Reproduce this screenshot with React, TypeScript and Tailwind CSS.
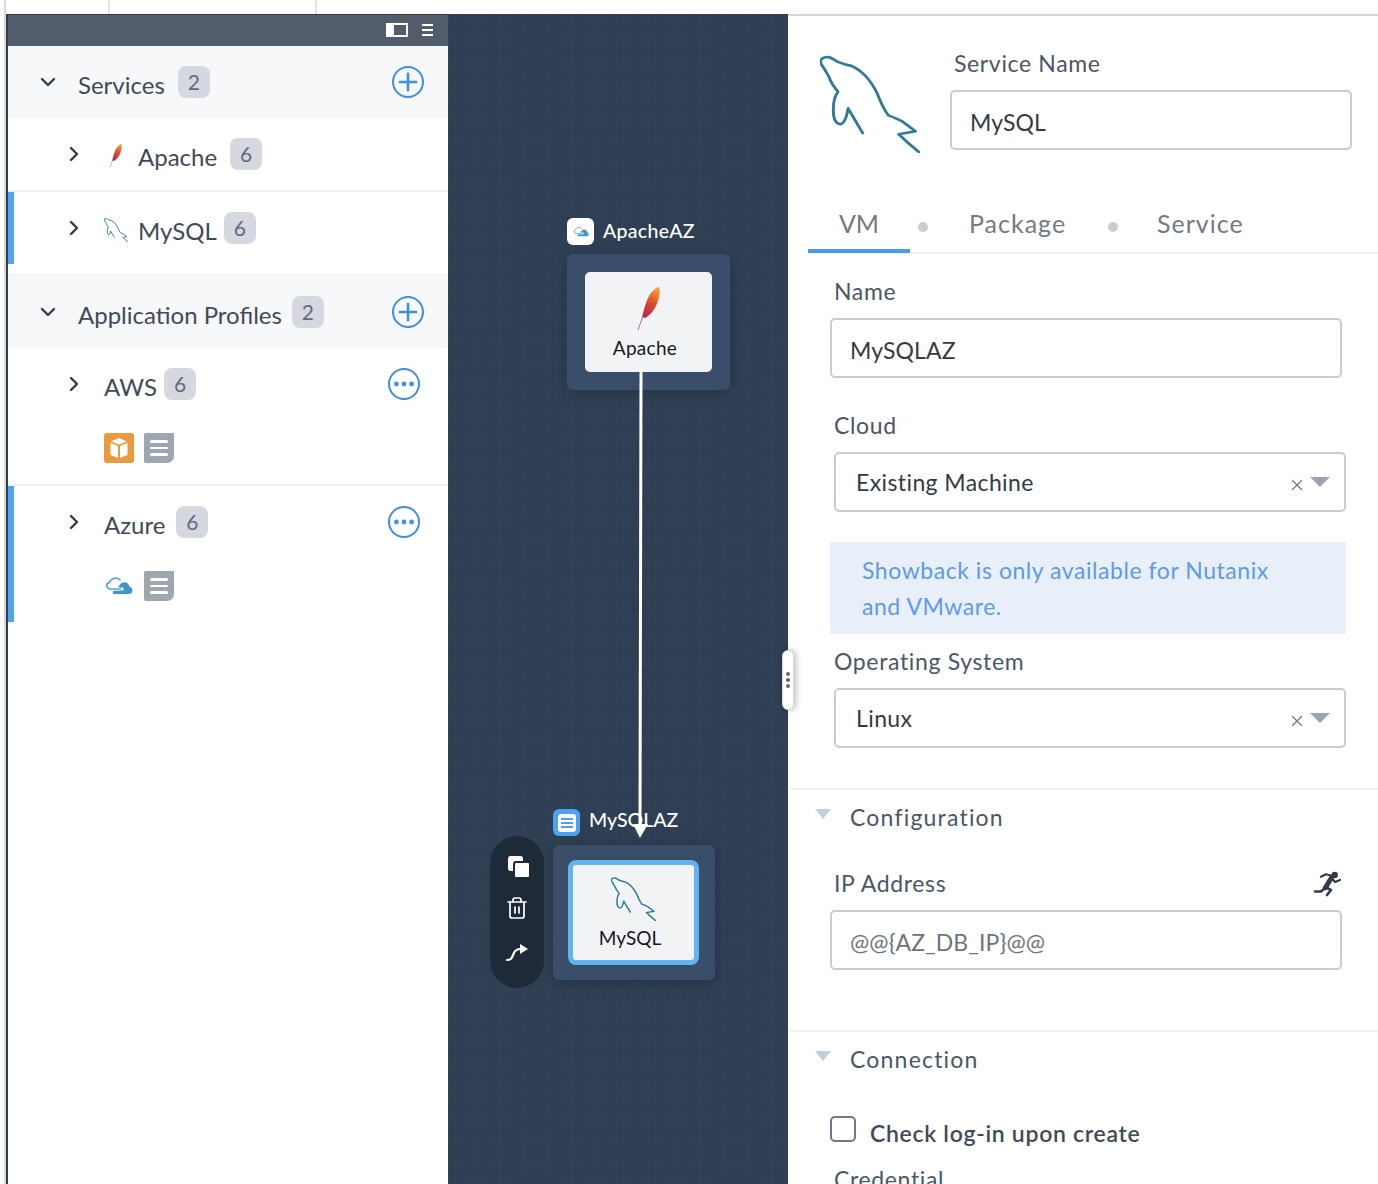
import { useId, type ReactNode } from "react";
import { ChevronDown, ChevronRight, Plus, Ellipsis, Trash2, X } from "lucide-react";

function Dolphin({ w, h, width = 2.6 }: { w: number; h: number; width?: number }) {
  return (
    <svg width={w} height={h} viewBox="2 1 89 99" preserveAspectRatio="none" fill="none" className="shrink-0">
      <path
        d="M40 80 L27 55 Q25 70 20 71 Q13 70 14 53 Q14 45 18 38 Q12 30 10 23 Q6 15 3 10 Q1 3 10 3 Q14 5 18 8 Q24 11 30 12 Q44 19 53 40 Q58 55 63 62 Q72 66 75 68 L87 78 L72 81 Q80 90 90 99"
        stroke="#2f7a96"
        strokeWidth={width}
        strokeLinejoin="round"
        strokeLinecap="round"
      />
    </svg>
  );
}

function Feather({ w, h }: { w: number; h: number }) {
  const id = useId();
  return (
    <svg width={w} height={h} viewBox="0 0 24 44" fill="none" className="shrink-0">
      <defs>
        <linearGradient id={id} x1="20" y1="0" x2="6" y2="32" gradientUnits="userSpaceOnUse">
          <stop offset="0" stopColor="#f5a83c" />
          <stop offset="0.5" stopColor="#dd4a2c" />
          <stop offset="1" stopColor="#a8235a" />
        </linearGradient>
      </defs>
      <path d="M22 0 C17 1 12 7 9 16 C7 22 6 26 5 30 L8 31 C14 28 20 20 22 10 C23 5 23 2 22 0Z" fill={`url(#${id})`} />
      <path d="M6 29 L1 43" stroke="#b06aa8" strokeWidth="1" />
    </svg>
  );
}

function AzureCloud({ w }: { w: number }) {
  return (
    <svg width={w} height={w * 0.68} viewBox="0 0 28 19" fill="none">
      <path d="M8 18 H24 C28 18 29 12 24.5 10.5 C23.5 6 18 5 15.5 8 C13 11 12 14 8 15Z" fill="#3d96c8" />
      <path d="M5 13 C1 12 0.5 7.5 4.5 6.5 C6 2 12 0.5 15 4" stroke="#4fa8d8" strokeWidth="1.6" strokeLinecap="round" />
      <path d="M4 13 H17" stroke="#fff" strokeWidth="3.4" />
      <path d="M4 13 H15" stroke="#4fa8d8" strokeWidth="1.4" strokeLinecap="round" />
      <circle cx="17" cy="13" r="1.9" fill="#fff" stroke="#4fa8d8" strokeWidth="0.9" />
    </svg>
  );
}

function Runner() {
  return (
    <svg width="28" height="26" viewBox="0 0 28 26" fill="none" stroke="#333b46" strokeLinecap="round" strokeLinejoin="round" className="shrink-0">
      <circle cx="21.7" cy="4" r="3.2" fill="#333b46" stroke="none" />
      <path d="M8 5.7 L13 3.3 L18 4.5" strokeWidth="2.2" />
      <path d="M18 7.5 L12.5 16.5" strokeWidth="5" />
      <path d="M12 17 L8 20.5 L2 20.5" strokeWidth="2.6" />
      <path d="M13 16.5 L18 19 L14 24" strokeWidth="2.6" />
      <path d="M19.5 8 L22 11 L27 9" strokeWidth="2.2" />
    </svg>
  );
}

function DocLines() {
  return (
    <div className="flex h-[30px] w-[30px] flex-col justify-center gap-[4px] rounded-[2px] rounded-br-[7px] rounded-tr-none bg-[#9ea7b0] px-[6px]">
      <div className="h-[2.5px] rounded-full bg-white" />
      <div className="h-[2.5px] rounded-full bg-white" />
      <div className="h-[2.5px] rounded-full bg-white" />
    </div>
  );
}

function Badge({ n, className = "" }: { n: number; className?: string }) {
  return (
    <div className={`flex h-[32px] w-[32px] shrink-0 items-center justify-center rounded-[8px] bg-[#d5d9df] text-[21px] text-[#5f6c80] ${className}`}>
      {n}
    </div>
  );
}

function Circle({ children, className = "" }: { children: ReactNode; className?: string }) {
  return (
    <div className={`flex h-[32px] w-[32px] shrink-0 items-center justify-center rounded-full border-2 border-[#3f8fe0] text-[#3f8fe0] ${className}`}>
      {children}
    </div>
  );
}

function GroupHead({ title, count, badgeGap }: { title: string; count: number; badgeGap: string }) {
  return (
    <div className="flex h-[72px] items-start bg-[#f7f8fa] pt-[20px] pl-[28px]">
      <ChevronDown size={24} strokeWidth={2.4} className="mt-[4px] shrink-0 text-[#323c4a]" />
      <span className="ml-[18px] mt-[5px] text-[24px] leading-[28px] text-[#3f4a59]">{title}</span>
      <Badge n={count} className={badgeGap} />
      <Circle className="ml-auto mr-[24px]">
        <Plus size={28} strokeWidth={2.2} />
      </Circle>
    </div>
  );
}

function ServiceRow({ icon, name, active, border, badgeGap }: { icon: ReactNode; name: string; active?: boolean; border?: boolean; badgeGap: string }) {
  return (
    <div className={`flex items-start ${border ? "h-[74px] border-b-2 border-[#f2f2f2]" : "h-[72px]"}`}>
      <div className={`h-[72px] w-[6px] shrink-0 ${active ? "bg-[#4fa4f0]" : ""}`} />
      <ChevronRight size={24} strokeWidth={2.4} className="ml-[48px] mt-[24px] shrink-0 text-[#323c4a]" />
      <div className="ml-[14px] mt-[24px] flex h-[28px] w-[32px] shrink-0 items-center justify-center">{icon}</div>
      <span className="ml-[6px] mt-[25px] text-[24px] leading-[28px] text-[#3f4a59]">{name}</span>
      <Badge n={6} className={`mt-[20px] ${badgeGap}`} />
    </div>
  );
}

function ProfileRow({ name, icon, active, badgeGap }: { name: string; icon: ReactNode; active?: boolean; badgeGap: string }) {
  return (
    <div className="flex h-[136px] items-start">
      <div className={`h-[136px] w-[6px] shrink-0 ${active ? "bg-[#4fa4f0]" : ""}`} />
      <ChevronRight size={24} strokeWidth={2.4} className="ml-[48px] mt-[24px] shrink-0 text-[#323c4a]" />
      <div className="ml-[18px] flex flex-1 flex-col">
        <div className="flex items-start">
          <span className="mt-[25px] text-[24px] leading-[28px] text-[#3f4a59]">{name}</span>
          <Badge n={6} className={`mt-[20px] ${badgeGap}`} />
          <Circle className="ml-auto mr-[28px] mt-[20px]">
            <Ellipsis size={26} strokeWidth={2.4} />
          </Circle>
        </div>
        <div className="mt-[32px] flex items-center gap-[10px]">
          {icon}
          <DocLines />
        </div>
      </div>
    </div>
  );
}

function LeftPanel() {
  return (
    <div className="w-[442px] shrink-0 border-t border-[#2d3e50] border-l-2 border-l-[#2d3e50]">
      <div className="flex h-[31px] items-center justify-end gap-[14px] bg-[#535c6b] pr-[15px] pb-[2px]">
        <div className="flex h-[14px] w-[22px] justify-end bg-white p-[2px] pl-[8px]">
          <div className="h-full w-full bg-[#535c6b]" />
        </div>
        <div className="flex w-[11px] flex-col gap-[3px]">
          <div className="h-[2px] bg-white" />
          <div className="h-[2px] bg-white" />
          <div className="h-[2px] bg-white" />
        </div>
      </div>
      <GroupHead title="Services" count={2} badgeGap="ml-[13px]" />
      <ServiceRow icon={<Feather w={14} h={24} />} name="Apache" badgeGap="ml-[13px]" border />
      <ServiceRow icon={<Dolphin w={24} h={24} width={3.6} />} name="MySQL" badgeGap="ml-[7px]" active />
      <div className="h-[12px] border-b-2 border-[#f2f2f2]" />
      <GroupHead title="Application Profiles" count={2} badgeGap="ml-[10px]" />
      <div className="border-b-2 border-[#f2f2f2]">
        <ProfileRow
          name="AWS"
          badgeGap="ml-[7px]"
          icon={
            <div className="flex h-[30px] w-[30px] items-center justify-center rounded-[3px] bg-[#e99a3e]">
              <svg width="20" height="22" viewBox="0 0 20 22" fill="#fff">
                <path d="M10 1 L18 4.5 L10 7.5 L2 4.5Z" />
                <path d="M1.5 6 L9 9 V21 L1.5 18Z" />
                <path d="M18.5 6 L11 9 V21 L18.5 18Z" />
              </svg>
            </div>
          }
        />
      </div>
      <ProfileRow
        name="Azure"
        badgeGap="ml-[11px]"
        active
        icon={
          <div className="flex h-[30px] w-[30px] items-center justify-center">
            <AzureCloud w={28} />
          </div>
        }
      />
    </div>
  );
}

function Canvas() {
  return (
    <div className="relative w-[340px] shrink-0 bg-[#2f3f54] bg-[linear-gradient(rgba(255,255,255,0.018)_1px,transparent_1px),linear-gradient(90deg,rgba(255,255,255,0.018)_1px,transparent_1px),linear-gradient(rgba(0,0,0,0.03)_1px,transparent_1px),linear-gradient(90deg,rgba(0,0,0,0.03)_1px,transparent_1px)] bg-[size:25px_25px,25px_25px,5px_5px,5px_5px]">
      {/* ApacheAZ node */}
      <div className="absolute left-[119px] top-[204px] w-[163px]">
        <div className="flex h-[27px] items-center">
          <div className="flex h-[27px] w-[27px] items-center justify-center rounded-[6px] bg-white">
            <AzureCloud w={16} />
          </div>
          <span className="ml-[9px] mb-[2px] text-[19.5px] font-medium tracking-[0.3px] text-white">ApacheAZ</span>
        </div>
        <div className="mt-[9px] h-[136px] rounded-[6px] bg-[#3a4d69] p-[18px] shadow-[0_2px_12px_rgba(0,0,0,0.2)]">
          <div className="flex h-[100px] w-[127px] flex-col items-center rounded-[5px] bg-[#f2f3f5] pt-[15px] text-[19px] text-[#15191f]">
            <Feather w={24} h={44} />
            <span className="mr-[7px] mt-[5px] leading-[24px] tracking-[0.3px]">Apache</span>
          </div>
        </div>
      </div>

      {/* MySQLAZ node */}
      <div className="absolute left-[105px] top-[795px] w-[162px]">
        <div className="flex h-[27px] items-center">
          <div className="flex h-[27px] w-[27px] items-center justify-center rounded-[6px] bg-[#4da3ef]">
            <div className="flex h-[18px] w-[18px] flex-col justify-center gap-[2px] rounded-[3px] bg-white px-[3px]">
              <div className="h-[2px] bg-[#4da3ef]" />
              <div className="h-[2px] bg-[#4da3ef]" />
              <div className="h-[2px] bg-[#4da3ef]" />
            </div>
          </div>
          <span className="ml-[9px] mb-[6px] text-[19.5px] font-medium text-white">MySQLAZ</span>
        </div>
        <div className="mt-[9px] h-[135px] rounded-[6px] bg-[#3a4d69] px-[15px] py-[15px] shadow-[0_2px_12px_rgba(0,0,0,0.2)]">
          <div className="flex h-[105px] w-[131px] flex-col items-center rounded-[8px] border-[5px] border-[#63b3f0] bg-[#f2f3f5] pt-[12px] text-[19px] text-[#15191f]">
            <Dolphin w={45} h={44} width={3} />
            <span className="mr-[7px] mt-[5px] leading-[24px]">MySQL</span>
          </div>
        </div>
      </div>

      {/* node toolbar */}
      <div className="absolute left-[42px] top-[822px] flex h-[152px] w-[54px] flex-col items-center rounded-full bg-[#1e2a38] pt-[19px] text-white">
        <svg width="24" height="24" viewBox="0 0 24 24" className="ml-[4px]" fill="#fff">
          <rect x="1" y="1" width="15" height="15" rx="2.5" stroke="#1e2a38" strokeWidth="0" />
          <rect x="7" y="7" width="16" height="16" rx="2" stroke="#1e2a38" strokeWidth="2" />
        </svg>
        <Trash2 size={24} strokeWidth={1.7} className="mt-[17px]" />
        <svg width="24" height="22" viewBox="0 0 24 22" fill="none" className="mt-[21px]">
          <path d="M2 19 C7 19 7 16 9 12 C10 9 12 8 16 8" stroke="#fff" strokeWidth="2.2" strokeLinecap="round" />
          <path d="M15 3 L23 8 L15 13Z" fill="#fff" />
        </svg>
      </div>

      {/* connector */}
      <svg className="absolute left-[180px] top-[355px]" width="24" height="470" viewBox="0 0 24 470" fill="none">
        <path d="M13 0 L12 460" stroke="#fff" strokeWidth="3" />
        <path d="M5 455 H20 L12 469Z" fill="#fff" />
      </svg>

      {/* resize handle */}
      <div className="absolute left-[334px] top-[636px] z-10 flex h-[60px] w-[12px] flex-col items-center justify-center gap-[2px] rounded-[6px] border border-[#d8d8d8] bg-white shadow-[2px_0_6px_rgba(0,0,0,0.25)]">
        <div className="h-[4px] w-[4px] rounded-full bg-[#666]" />
        <div className="h-[4px] w-[4px] rounded-full bg-[#666]" />
        <div className="h-[4px] w-[4px] rounded-full bg-[#666]" />
      </div>
    </div>
  );
}

function Label({ children, className = "" }: { children: ReactNode; className?: string }) {
  return <div className={`ml-[45px] h-[28px] text-[23px] leading-[26px] tracking-[0.65px] text-[#4b5666] ${className}`}>{children}</div>;
}

function TextBox({ value, muted, className = "" }: { value: string; muted?: boolean; className?: string }) {
  return (
    <div className={`flex h-[60px] items-center rounded-[5px] border-2 border-[#c9ccd1] pl-[18px] pt-[4px] text-[23px] tracking-[0.1px] ${muted ? "text-[#6b7480]" : "text-[#333a44]"} ${className}`}>
      {value}
    </div>
  );
}

function SelectBox({ value, className = "" }: { value: string; className?: string }) {
  return (
    <div className={`ml-[45px] mt-[12px] flex h-[60px] w-[512px] items-center rounded-[5px] border-2 border-[#c9ccd1] pl-[20px] text-[23px] tracking-[0.4px] text-[#333a44] ${className}`}>
      {value}
      <X size={18} strokeWidth={1.6} className="ml-auto mt-[6px] text-[#6f7883]" />
      <div className="ml-[4px] mr-[14px] h-0 w-0 border-x-[10px] border-t-[10px] border-x-transparent border-t-[#9aa5b1]" />
    </div>
  );
}

function SectionHead({ title }: { title: string }) {
  return (
    <div className="mt-[14px] flex h-[28px] items-center">
      <div className="ml-[26px] mb-[8px] h-0 w-0 border-x-[8px] border-t-[10px] border-x-transparent border-t-[#bcd0e0]" />
      <span className="mb-[2px] ml-[19px] text-[23px] leading-[26px] tracking-[1.2px] text-[#4b5666]">{title}</span>
    </div>
  );
}

function RightPanel() {
  return (
    <div className="min-w-0 flex-1 border-t-2 border-[#d6d6d6] bg-white pl-[1px]">
      {/* header */}
      <div className="flex h-[184px] items-start pl-[31px]">
        <div className="mt-[39px]">
          <Dolphin w={100} h={98} />
        </div>
        <div className="ml-[30px] w-[402px] pt-[34px]">
          <div className="ml-[4px] h-[28px] text-[23px] leading-[26px] tracking-[0.65px] text-[#4b5666]">Service Name</div>
          <TextBox value="MySQL" className="mt-[12px]" />
        </div>
      </div>

      {/* tabs */}
      <div className="ml-[19px] flex h-[54px] items-center border-b-2 border-[#f2f2f2] text-[25px] tracking-[1px] text-[#717b86]">
        <div className="flex h-[54px] w-[102px] items-center justify-center border-b-4 border-[#4a9ee8] pb-[1px] tracking-normal">VM</div>
        <div className="ml-[8px] mt-[2px] h-[10px] w-[10px] rounded-full bg-[#cccccc]" />
        <div className="ml-[41px] w-[139px] pb-[4px]">Package</div>
        <div className="mt-[2px] h-[10px] w-[10px] rounded-full bg-[#cccccc]" />
        <div className="ml-[39px] pb-[4px]">Service</div>
      </div>

      {/* VM form */}
      <Label className="mt-[24px]">Name</Label>
      <TextBox value="MySQLAZ" className="ml-[41px] mt-[12px] w-[512px]" />
      <Label className="mt-[34px]">Cloud</Label>
      <SelectBox value="Existing Machine" />
      <div className="ml-[41px] mt-[30px] h-[92px] w-[516px] bg-[#e8eff9] py-[10px] pl-[32px] pr-[60px] text-[23px] leading-[36px] tracking-[0.55px] text-[#5d9ae8]">
        Showback is only available for Nutanix and VMware.
      </div>
      <Label className="mt-[14px]">Operating System</Label>
      <SelectBox value="Linux" />

      <div className="mt-[40px] h-[2px] bg-[#f2f2f2]" />
      <SectionHead title="Configuration" />
      <div className="mt-[38px] flex items-center">
        <Label>IP Address</Label>
        <div className="ml-auto mr-[37px] -mt-[1px]">
          <Runner />
        </div>
      </div>
      <TextBox value="@@{AZ_DB_IP}@@" muted className="ml-[41px] mt-[12px] w-[512px]" />

      <div className="mt-[60px] h-[2px] bg-[#f2f2f2]" />
      <SectionHead title="Connection" />
      <div className="ml-[41px] mt-[42px] flex items-start">
        <div className="h-[26px] w-[26px] rounded-[5px] border-2 border-[#6f7883] bg-white" />
        <span className="ml-[14px] mt-[3px] text-[23px] font-semibold leading-[28px] tracking-[0.7px] text-[#3f4a59]">Check log-in upon create</span>
      </div>
      <Label className="mt-[19px]">Credential</Label>
    </div>
  );
}

export default function App() {
  return (
    <div className="flex h-[1184px] w-[1378px] flex-col overflow-hidden bg-white font-['Lato',sans-serif]">
      <div className="flex h-[14px] shrink-0 pl-[4px]">
        <div className="w-[106px] border-x-2 border-x-[#e4e4e4] border-l-[#d8d8d8]" />
        <div className="w-[207px] border-r-2 border-[#e4e4e4]" />
      </div>
      <div className="flex min-h-0 flex-1 pl-[4px]">
        <div className="w-[2px] shrink-0 bg-[#d8d8d8]" />
        <LeftPanel />
        <Canvas />
        <RightPanel />
      </div>
    </div>
  );
}
